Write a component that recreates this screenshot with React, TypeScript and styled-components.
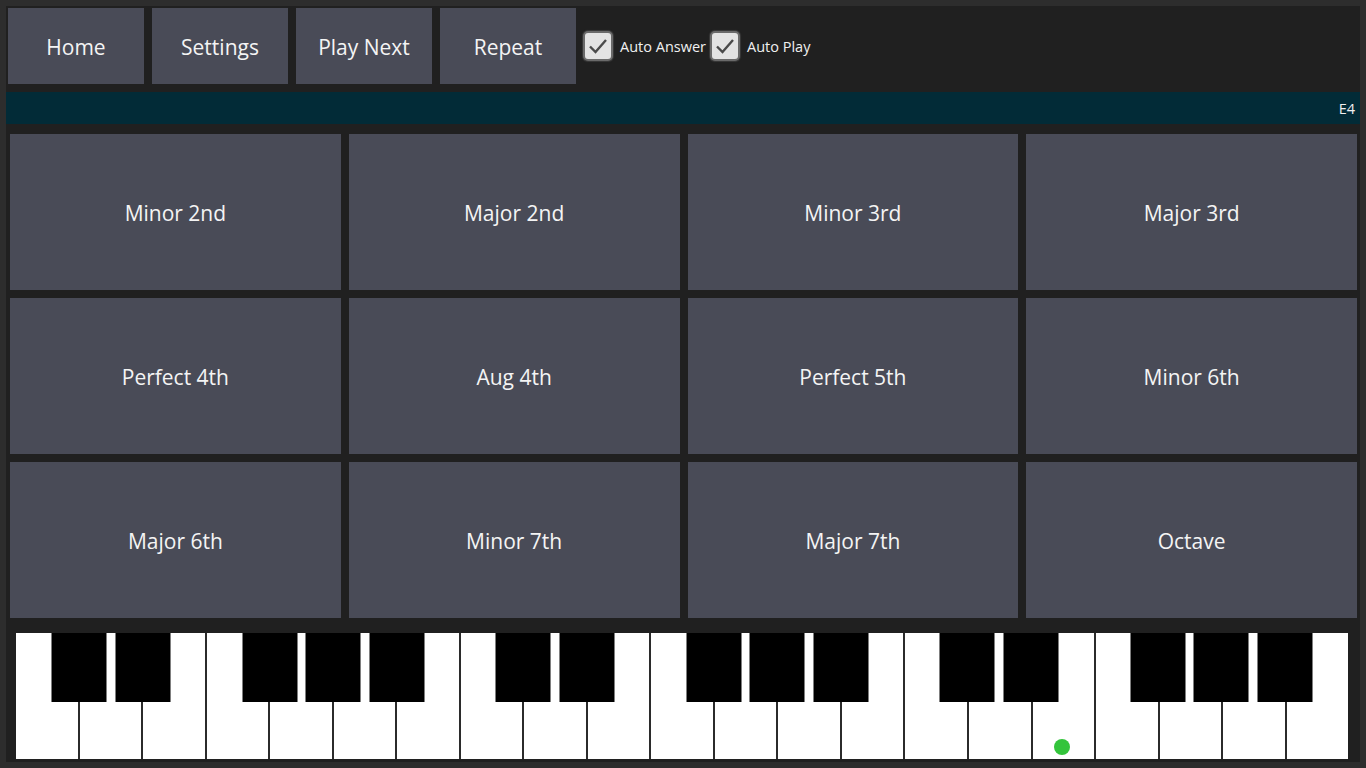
import React from "react";
import styled, { createGlobalStyle } from "styled-components";

const GlobalStyle = createGlobalStyle`
  html, body { margin: 0; padding: 0; background: #2d2d2d; }
  * { box-sizing: border-box; }
`;

const Frame = styled.div`
  width: 1366px;
  height: 768px;
  padding: 6px;
  background: #2d2d2d;
  font-family: "Open Sans", "Noto Sans", sans-serif;
  color: #f4f4f4;
`;

const Inner = styled.div`
  height: 100%;
  background: #202020;
  display: flex;
  flex-direction: column;
`;

const Toolbar = styled.div`
  display: flex;
  align-items: center;
  gap: 8px;
  padding: 2px 2px 0 2px;
  height: 78px;
`;

const ToolButton = styled.button`
  width: 136px;
  height: 76px;
  border: none;
  margin: 0;
  padding: 2px 0 0 0;
  background: #494b57;
  color: #f4f4f4;
  font-family: inherit;
  font-size: 21px;
`;

const Checks = styled.div`
  display: flex;
  align-items: center;
  margin-left: -1px;
  gap: 4px;
`;

const CheckLabel = styled.label`
  display: flex;
  align-items: center;
  gap: 7px;
  font-size: 14.5px;
  color: #f0f0f0;
`;

const Box = styled.span`
  width: 30px;
  height: 30px;
  border-radius: 5px;
  background: #e3e3e3;
  border: 2px solid #6a6a6a;
  box-shadow: 0 0 1px 1px #3a3a3a;
  display: flex;
  align-items: center;
  justify-content: center;
`;

const StatusBar = styled.div`
  margin-top: 8px;
  height: 32px;
  background: #022b37;
  display: flex;
  align-items: center;
  justify-content: flex-end;
  padding-right: 5px;
  font-size: 14.5px;
  color: #f0f0f0;
`;

const Grid = styled.div`
  margin-top: 10px;
  padding: 0 3px 0 4px;
  display: grid;
  grid-template-columns: repeat(4, 1fr);
  grid-template-rows: repeat(3, 156px);
  gap: 8px;
`;

const Cell = styled.button`
  border: none;
  margin: 0;
  padding: 2px 0 0 0;
  background: #494b57;
  color: #f4f4f4;
  font-family: inherit;
  font-size: 21px;
`;

const PianoWrap = styled.div`
  padding: 15px 12px 3px 10px;
`;

const Piano = styled.div`
  position: relative;
  height: 126px;
  display: flex;
  background: #ffffff;
`;

const WhiteKey = styled.div<{ $last: boolean }>`
  flex: 1;
  position: relative;
  background: #ffffff;
  border-right: ${(p) => (p.$last ? "none" : "2px solid #2b2b2b")};
`;

const BlackKey = styled.div`
  position: absolute;
  top: 0;
  width: 55px;
  height: 69px;
  background: #000000;
  transform: translateX(-50%);
`;

const Dot = styled.span`
  position: absolute;
  left: 50%;
  bottom: 4px;
  width: 16px;
  height: 16px;
  margin-left: -9px;
  border-radius: 50%;
  background: #33c43b;
`;

const Check = () => (
  <svg width="22" height="22" viewBox="0 0 22 22">
    <path d="M3 11.5 L8.5 17 L19 5" fill="none" stroke="#4a4a4a" strokeWidth="2.4" />
  </svg>
);

const intervals = [
  "Minor 2nd", "Major 2nd", "Minor 3rd", "Major 3rd",
  "Perfect 4th", "Aug 4th", "Perfect 5th", "Minor 6th",
  "Major 6th", "Minor 7th", "Major 7th", "Octave",
];

const WHITE_COUNT = 21;
const blackAfter = [0, 1, 3, 4, 5];

export default function App() {
  const blacks: number[] = [];
  for (let o = 0; o < 3; o++) {
    for (const b of blackAfter) blacks.push(o * 7 + b + 1);
  }
  return (
    <>
      <GlobalStyle />
      <Frame>
        <Inner>
          <Toolbar>
            <ToolButton>Home</ToolButton>
            <ToolButton>Settings</ToolButton>
            <ToolButton>Play Next</ToolButton>
            <ToolButton>Repeat</ToolButton>
            <Checks>
              <CheckLabel>
                <Box><Check /></Box>
                Auto Answer
              </CheckLabel>
              <CheckLabel>
                <Box><Check /></Box>
                Auto Play
              </CheckLabel>
            </Checks>
          </Toolbar>
          <StatusBar>E4</StatusBar>
          <Grid>
            {intervals.map((t) => (
              <Cell key={t}>{t}</Cell>
            ))}
          </Grid>
          <PianoWrap>
            <Piano>
              {Array.from({ length: WHITE_COUNT }).map((_, i) => (
                <WhiteKey key={i} $last={i === WHITE_COUNT - 1}>
                  {i === 16 && <Dot />}
                </WhiteKey>
              ))}
              {blacks.map((b) => (
                <BlackKey key={b} style={{ left: `${(b / WHITE_COUNT) * 100}%` }} />
              ))}
            </Piano>
          </PianoWrap>
        </Inner>
      </Frame>
    </>
  );
}
